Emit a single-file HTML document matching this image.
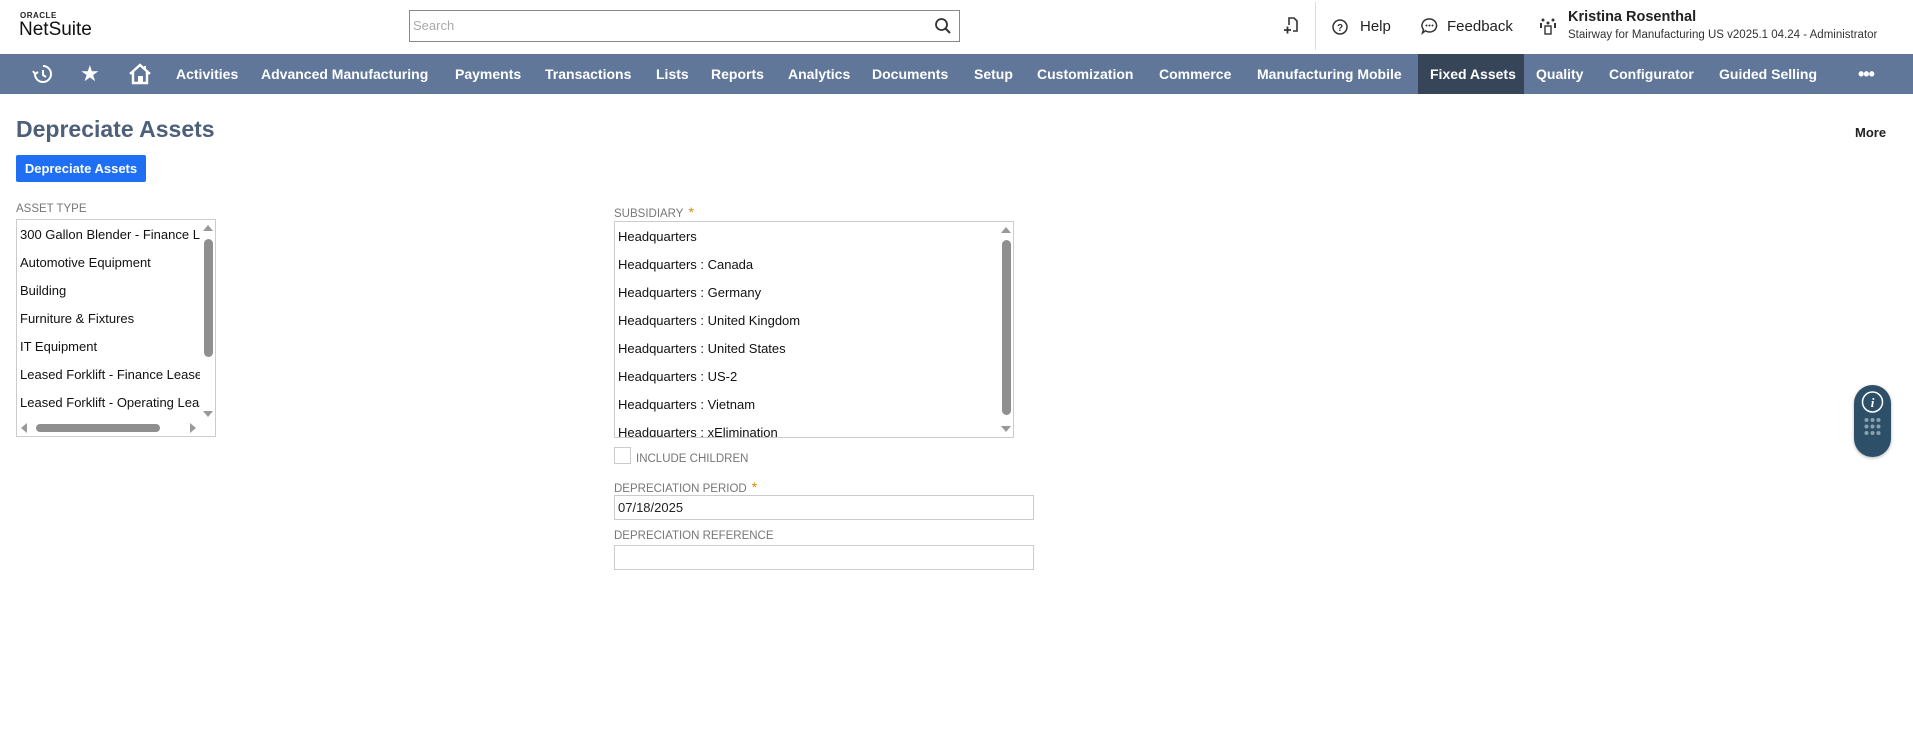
<!DOCTYPE html>
<html><head><meta charset="utf-8"><style>
*{box-sizing:border-box;margin:0;padding:0}
body{width:1913px;height:736px;background:#fff;font-family:"Liberation Sans",sans-serif;position:relative;overflow:hidden;color:#222}
.a{position:absolute;white-space:nowrap}
.nav{position:absolute;left:0;top:54px;width:1913px;height:40px;background:#607799}
.ni{position:absolute;top:0;height:40px;line-height:40px;color:#fff;font-weight:bold;font-size:14px}
.lbl{position:absolute;font-size:11.5px;color:#777;text-transform:uppercase}
.star{color:#e08a00;font-size:14px;margin-left:5px}
.box{position:absolute;border:1px solid #ccc;background:#fff;overflow:hidden}
.it{position:absolute;left:3px;font-size:13px;color:#111;line-height:16px}
</style></head><body>
<div class="a" style="left:20px;top:11px;font-size:8px;font-weight:bold;letter-spacing:.5px">ORACLE</div>
<div class="a" style="left:19px;top:19px;font-size:19px;color:#111">NetSuite</div>
<div class="a" style="left:409px;top:10px;width:551px;height:32px;border:1px solid #888"></div>
<div class="a" style="left:413px;top:18px;font-size:13px;color:#aaa">Search</div>
<svg class="a" style="left:934px;top:17px" width="18" height="18" viewBox="0 0 18 18"><circle cx="7.5" cy="7.5" r="5.5" fill="none" stroke="#333" stroke-width="1.8"/><path d="M11.5 11.5L16 16" stroke="#333" stroke-width="2"/></svg>
<svg class="a" style="left:1283px;top:16px" width="16" height="20" viewBox="0 0 16 20"><path d="M6 9V2h5l3 3v10h-4" fill="none" stroke="#333" stroke-width="1.6"/><path d="M1 14h7M4.5 10.5v7" stroke="#333" stroke-width="1.8"/></svg>
<div class="a" style="left:1315px;top:2px;width:1px;height:48px;background:#ddd"></div>
<svg class="a" style="left:1331px;top:18px" width="18" height="18"><circle cx="9" cy="9" r="7" fill="none" stroke="#333" stroke-width="1.5"/><text x="9" y="13" font-size="10" text-anchor="middle" font-family="Liberation Sans" font-weight="bold" fill="#333">?</text></svg>
<div class="a" style="left:1360px;top:18px;font-size:15px;color:#222">Help</div>
<svg class="a" style="left:1420px;top:17px" width="19" height="19"><path d="M9.5 2a7 6.5 0 1 1-4 11.8L2.5 16l1-3.5A7 6.5 0 0 1 9.5 2z" fill="none" stroke="#333" stroke-width="1.5"/><circle cx="6.5" cy="8.5" r="1" fill="#333"/><circle cx="9.5" cy="8.5" r="1" fill="#333"/><circle cx="12.5" cy="8.5" r="1" fill="#333"/></svg>
<div class="a" style="left:1447px;top:18px;font-size:15px;color:#222">Feedback</div>
<svg class="a" style="left:1539px;top:16px" width="18" height="20"><circle cx="4" cy="4" r="1.5" fill="#333"/><circle cx="14" cy="4" r="1.5" fill="#333"/><circle cx="9" cy="7" r="1.5" fill="#333"/><rect x="6" y="10" width="6" height="8" fill="none" stroke="#333" stroke-width="1.4"/><path d="M2 7v5M16 7v5" stroke="#333" stroke-width="2"/></svg>
<div class="a" style="left:1568px;top:9px;font-size:14.5px;font-weight:bold;color:#222">Kristina Rosenthal</div>
<div class="a" style="left:1568px;top:29px;font-size:11.5px;color:#333">Stairway for Manufacturing US v2025.1 04.24 - Administrator</div>
<div class="nav">
<svg class="ni" style="left:32px;top:9px;height:22px" width="22" height="22"><path d="M11 3a8 8 0 1 1-8 8" fill="none" stroke="#fff" stroke-width="2"/><path d="M3 11l-2-3M3 11l3-2M11 7v5l3 2" fill="none" stroke="#fff" stroke-width="2"/></svg>
<div class="ni" style="left:80px;font-size:22px;font-weight:normal">★</div>
<svg class="ni" style="left:128px;top:8px;height:24px" width="24" height="24"><path d="M2 12L12 3l10 9M5 10v11h14V10" fill="none" stroke="#fff" stroke-width="2.4"/><rect x="10" y="14" width="5" height="7" fill="#fff"/><path d="M17 4v4" stroke="#fff" stroke-width="2"/></svg>
<div class="ni" style="left:176px">Activities</div>
<div class="ni" style="left:261px">Advanced Manufacturing</div>
<div class="ni" style="left:455px">Payments</div>
<div class="ni" style="left:545px">Transactions</div>
<div class="ni" style="left:656px">Lists</div>
<div class="ni" style="left:711px">Reports</div>
<div class="ni" style="left:788px">Analytics</div>
<div class="ni" style="left:872px">Documents</div>
<div class="ni" style="left:974px">Setup</div>
<div class="ni" style="left:1037px">Customization</div>
<div class="ni" style="left:1159px">Commerce</div>
<div class="ni" style="left:1257px">Manufacturing Mobile</div>
<div class="ni" style="left:1418px;width:106px;background:#374559"></div>
<div class="ni" style="left:1430px">Fixed Assets</div>
<div class="ni" style="left:1536px">Quality</div>
<div class="ni" style="left:1609px">Configurator</div>
<div class="ni" style="left:1719px">Guided Selling</div>
<div class="ni" style="left:1858px;font-size:18px;letter-spacing:-1px">•••</div>
</div>
<div class="a" style="left:16px;top:116px;font-size:23px;font-weight:bold;color:#4d5f79">Depreciate Assets</div>
<div class="a" style="left:1855px;top:125px;font-size:13px;font-weight:bold;color:#222">More</div>
<div class="a" style="left:16px;top:155px;width:130px;height:27px;background:#1f6ff5;border-radius:2px;color:#fff;font-weight:bold;font-size:13px;line-height:27px;text-align:center">Depreciate Assets</div>
<div class="lbl" style="left:16px;top:203px">Asset Type</div>
<div class="box" style="left:16px;top:219px;width:200px;height:218px">
<div class="it" style="top:7px">300 Gallon Blender - Finance L</div>
<div class="it" style="top:35px">Automotive Equipment</div>
<div class="it" style="top:63px">Building</div>
<div class="it" style="top:91px">Furniture &amp; Fixtures</div>
<div class="it" style="top:119px">IT Equipment</div>
<div class="it" style="top:147px">Leased Forklift - Finance Lease</div>
<div class="it" style="top:175px">Leased Forklift - Operating Lease</div>
<div class="a" style="left:183px;top:0;width:16px;height:200px;background:#fff"></div>
<div class="a" style="left:187px;top:19px;width:9px;height:118px;background:#8f8f8f;border-radius:5px"></div>
<div class="a" style="left:186px;top:5px;border:5px solid transparent;border-bottom:6px solid #999;border-top:0"></div>
<div class="a" style="left:186px;top:191px;border:5px solid transparent;border-top:6px solid #999;border-bottom:0"></div>
<div class="a" style="left:0;top:200px;width:200px;height:18px;background:#fff"></div>
<div class="a" style="left:19px;top:204px;width:124px;height:8px;background:#8f8f8f;border-radius:4px"></div>
<div class="a" style="left:4px;top:203px;border:5px solid transparent;border-right:6px solid #999;border-left:0"></div>
<div class="a" style="left:173px;top:203px;border:5px solid transparent;border-left:6px solid #999;border-right:0"></div>
</div>
<div class="lbl" style="left:614px;top:204px">Subsidiary<span class="star">*</span></div>
<div class="box" style="left:614px;top:221px;width:400px;height:217px">
<div class="it" style="top:7px">Headquarters</div>
<div class="it" style="top:35px">Headquarters : Canada</div>
<div class="it" style="top:63px">Headquarters : Germany</div>
<div class="it" style="top:91px">Headquarters : United Kingdom</div>
<div class="it" style="top:119px">Headquarters : United States</div>
<div class="it" style="top:147px">Headquarters : US-2</div>
<div class="it" style="top:175px">Headquarters : Vietnam</div>
<div class="it" style="top:203px">Headquarters : xElimination</div>
<div class="a" style="left:385px;top:0;width:14px;height:216px;background:#fff"></div>
<div class="a" style="left:387px;top:18px;width:9px;height:175px;background:#8f8f8f;border-radius:5px"></div>
<div class="a" style="left:386px;top:5px;border:5px solid transparent;border-bottom:6px solid #999;border-top:0"></div>
<div class="a" style="left:386px;top:204px;border:5px solid transparent;border-top:6px solid #999;border-bottom:0"></div>
</div>
<div class="a" style="left:614px;top:447px;width:17px;height:17px;border:1px solid #ccc"></div>
<div class="lbl" style="left:636px;top:453px">Include Children</div>
<div class="lbl" style="left:614px;top:479px">Depreciation Period<span class="star">*</span></div>
<div class="a" style="left:614px;top:495px;width:420px;height:25px;border:1px solid #ccc;font-size:13px;padding:4px 3px;color:#222">07/18/2025</div>
<div class="lbl" style="left:614px;top:530px">Depreciation Reference</div>
<div class="a" style="left:614px;top:545px;width:420px;height:25px;border:1px solid #ccc"></div>
<div class="a" style="left:1854px;top:385px;width:37px;height:72px;background:#2d5068;border-radius:19px;box-shadow:0 1px 3px rgba(0,0,0,.3)">
<svg width="37" height="72"><circle cx="18.5" cy="17" r="10" fill="none" stroke="#fff" stroke-width="1.5"/><text x="18.5" y="22" font-size="13" font-style="italic" font-weight="bold" text-anchor="middle" font-family="Liberation Serif" fill="#fff">i</text>
<g fill="#8aa0ae"><circle cx="12.5" cy="35" r="2"/><circle cx="18.5" cy="35" r="2"/><circle cx="24.5" cy="35" r="2"/><circle cx="12.5" cy="41.5" r="2"/><circle cx="18.5" cy="41.5" r="2"/><circle cx="24.5" cy="41.5" r="2"/><circle cx="12.5" cy="48" r="2"/><circle cx="18.5" cy="48" r="2"/><circle cx="24.5" cy="48" r="2"/></g></svg>
</div>
</body></html>
